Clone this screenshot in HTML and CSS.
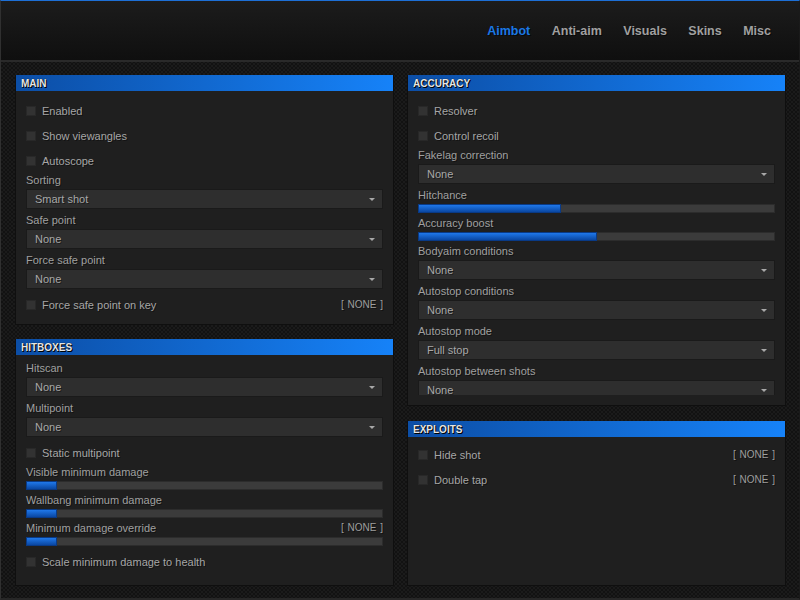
FILE: index.html
```html
<!DOCTYPE html>
<html>
<head>
<meta charset="utf-8">
<link rel="stylesheet" href="styles.css">
</head>
<body>
<div class="window">
  <header class="topbar">
    <nav class="tabs">
      <span class="tab active">Aimbot</span>
      <span class="tab">Anti-aim</span>
      <span class="tab">Visuals</span>
      <span class="tab">Skins</span>
      <span class="tab">Misc</span>
    </nav>
  </header>
  <main class="content">
    <div class="column">
      <section class="panel panel-main">
        <div class="panel-title">MAIN</div>
        <div class="panel-body">
          <div class="check first"><span class="box"></span><span class="text">Enabled</span></div>
          <div class="check"><span class="box"></span><span class="text">Show viewangles</span></div>
          <div class="check"><span class="box"></span><span class="text">Autoscope</span></div>
          <div class="label">Sorting</div>
          <div class="select"><span>Smart shot</span><span class="arrow"></span></div>
          <div class="label">Safe point</div>
          <div class="select"><span>None</span><span class="arrow"></span></div>
          <div class="label">Force safe point</div>
          <div class="select"><span>None</span><span class="arrow"></span></div>
          <div class="check"><span class="box"></span><span class="text">Force safe point on key</span><span class="key">[ NONE ]</span></div>
        </div>
      </section>
      <section class="panel panel-hitboxes">
        <div class="panel-title">HITBOXES</div>
        <div class="panel-body">
          <div class="label">Hitscan</div>
          <div class="select"><span>None</span><span class="arrow"></span></div>
          <div class="label">Multipoint</div>
          <div class="select"><span>None</span><span class="arrow"></span></div>
          <div class="check"><span class="box"></span><span class="text">Static multipoint</span></div>
          <div class="label">Visible minimum damage</div>
          <div class="slider"><div class="fill" style="width:8.7%"></div></div>
          <div class="label">Wallbang minimum damage</div>
          <div class="slider"><div class="fill" style="width:8.7%"></div></div>
          <div class="label"><span>Minimum damage override</span><span class="key">[ NONE ]</span></div>
          <div class="slider"><div class="fill" style="width:8.7%"></div></div>
          <div class="check"><span class="box"></span><span class="text">Scale minimum damage to health</span></div>
        </div>
      </section>
    </div>
    <div class="column">
      <section class="panel panel-accuracy">
        <div class="panel-title">ACCURACY</div>
        <div class="panel-body scroll">
          <div class="check first"><span class="box"></span><span class="text">Resolver</span></div>
          <div class="check"><span class="box"></span><span class="text">Control recoil</span></div>
          <div class="label">Fakelag correction</div>
          <div class="select"><span>None</span><span class="arrow"></span></div>
          <div class="label">Hitchance</div>
          <div class="slider"><div class="fill" style="width:40%"></div></div>
          <div class="label">Accuracy boost</div>
          <div class="slider"><div class="fill" style="width:50%"></div></div>
          <div class="label">Bodyaim conditions</div>
          <div class="select"><span>None</span><span class="arrow"></span></div>
          <div class="label">Autostop conditions</div>
          <div class="select"><span>None</span><span class="arrow"></span></div>
          <div class="label">Autostop mode</div>
          <div class="select"><span>Full stop</span><span class="arrow"></span></div>
          <div class="label">Autostop between shots</div>
          <div class="select"><span>None</span><span class="arrow"></span></div>
        </div>
      </section>
      <section class="panel panel-exploits">
        <div class="panel-title">EXPLOITS</div>
        <div class="panel-body">
          <div class="check first"><span class="box"></span><span class="text">Hide shot</span><span class="key">[ NONE ]</span></div>
          <div class="check"><span class="box"></span><span class="text">Double tap</span><span class="key">[ NONE ]</span></div>
        </div>
      </section>
    </div>
  </main>
</div>
</body>
</html>
```

FILE: styles.css
```css
* { box-sizing: border-box; }

html, body {
  margin: 0;
  padding: 0;
  background: #141414;
}

.window {
  width: 800px;
  height: 600px;
  display: flex;
  flex-direction: column;
  border-top: 1px solid #1d6fd6;
  border-left: 1px solid #303030;
  border-right: 1px solid #1a1a1a;
  border-bottom: 2px solid #272727;
  font-family: "Liberation Sans", Arial, sans-serif;
  background-color: #171717;
  background-image: repeating-conic-gradient(#1b1b1b 0% 25%, #121212 0% 50%);
  background-size: 4px 4px;
  overflow: hidden;
}

.topbar {
  height: 61px;
  flex: none;
  display: flex;
  align-items: center;
  justify-content: flex-end;
  background: linear-gradient(#1c1c1c, #0f0f0f);
  border-bottom: 2px solid #2a2a2a;
}

.tabs {
  display: flex;
  gap: 21.5px;
  margin-right: 28px;
  margin-top: 1px;
}

.tab {
  font-weight: bold;
  font-size: 12.5px;
  color: #a0a0a0;
  text-shadow: 1px 1px 0 rgba(0, 0, 0, 0.6);
}

.tab.active { color: #1a78e6; }

.content {
  flex: 1;
  display: grid;
  grid-template-columns: 379px 379px;
  gap: 13px;
  padding: 13px 13px 0 14px;
}

.column {
  display: flex;
  flex-direction: column;
}

.panel {
  background: #1f1f1f;
  border: 1px solid #0f0f0f;
  border-top: 0;
  display: flex;
  flex-direction: column;
}

.panel-main { height: 250px; }
.panel-hitboxes { height: 247px; margin-top: 14px; }
.panel-accuracy { height: 331px; padding-bottom: 10px; }
.panel-exploits { height: 165px; margin-top: 15px; }

.panel-title {
  height: 16px;
  line-height: 16px;
  padding: 1px 0 0 5px;
  font-size: 10px;
  font-weight: bold;
  color: #e6e6e6;
  text-shadow: 1px 1px 0 #000, 0 0 1px #000;
  background: linear-gradient(90deg, #0c4ea6, #1682f8);
}

.panel-body {
  padding: 4px 10px 0 10px;
  font-size: 11px;
  color: #a6a6a6;
  text-shadow: 1px 1px 0 rgba(0, 0, 0, 0.45);
}

.panel-body.scroll {
  height: 304px;
  overflow: hidden;
}

.check {
  height: 25px;
  display: flex;
  align-items: center;
}

.check.first { margin-top: 3px; }
.panel-exploits .check.first { margin-top: 1px; }

.select + .check,
.slider + .check { margin-top: 3px; }

.box {
  width: 10px;
  height: 10px;
  margin-right: 6px;
  background: #323232;
  border: 1px solid #282828;
  flex: none;
}

.text { flex: 1; }

.key {
  font-size: 10px;
  color: #9e9e9e;
  margin-left: auto;
  word-spacing: 1px;
}

.label {
  height: 18px;
  line-height: 18px;
  color: #a0a0a0;
  display: flex;
  justify-content: space-between;
  align-items: center;
}

.check + .label { margin-top: -2px; }

.select {
  height: 20px;
  margin-bottom: 2px;
  background: #2e2e2e;
  border: 1px solid #1a1a1a;
  display: flex;
  align-items: center;
  justify-content: space-between;
  padding: 0 7px 0 8px;
  color: #a8a8a8;
}

.arrow {
  width: 0;
  height: 0;
  border-left: 3px solid transparent;
  border-right: 3px solid transparent;
  border-top: 3px solid #a8a8a8;
}

.slider {
  height: 9px;
  margin-bottom: 1px;
  background: #3b3b3b;
  box-shadow: inset 0 0 0 1px #2c2c2c;
  display: flex;
}

.fill {
  height: 100%;
  background: linear-gradient(#1f78ea, #0a47a2);
  border: 1px solid #093a86;
}
```
